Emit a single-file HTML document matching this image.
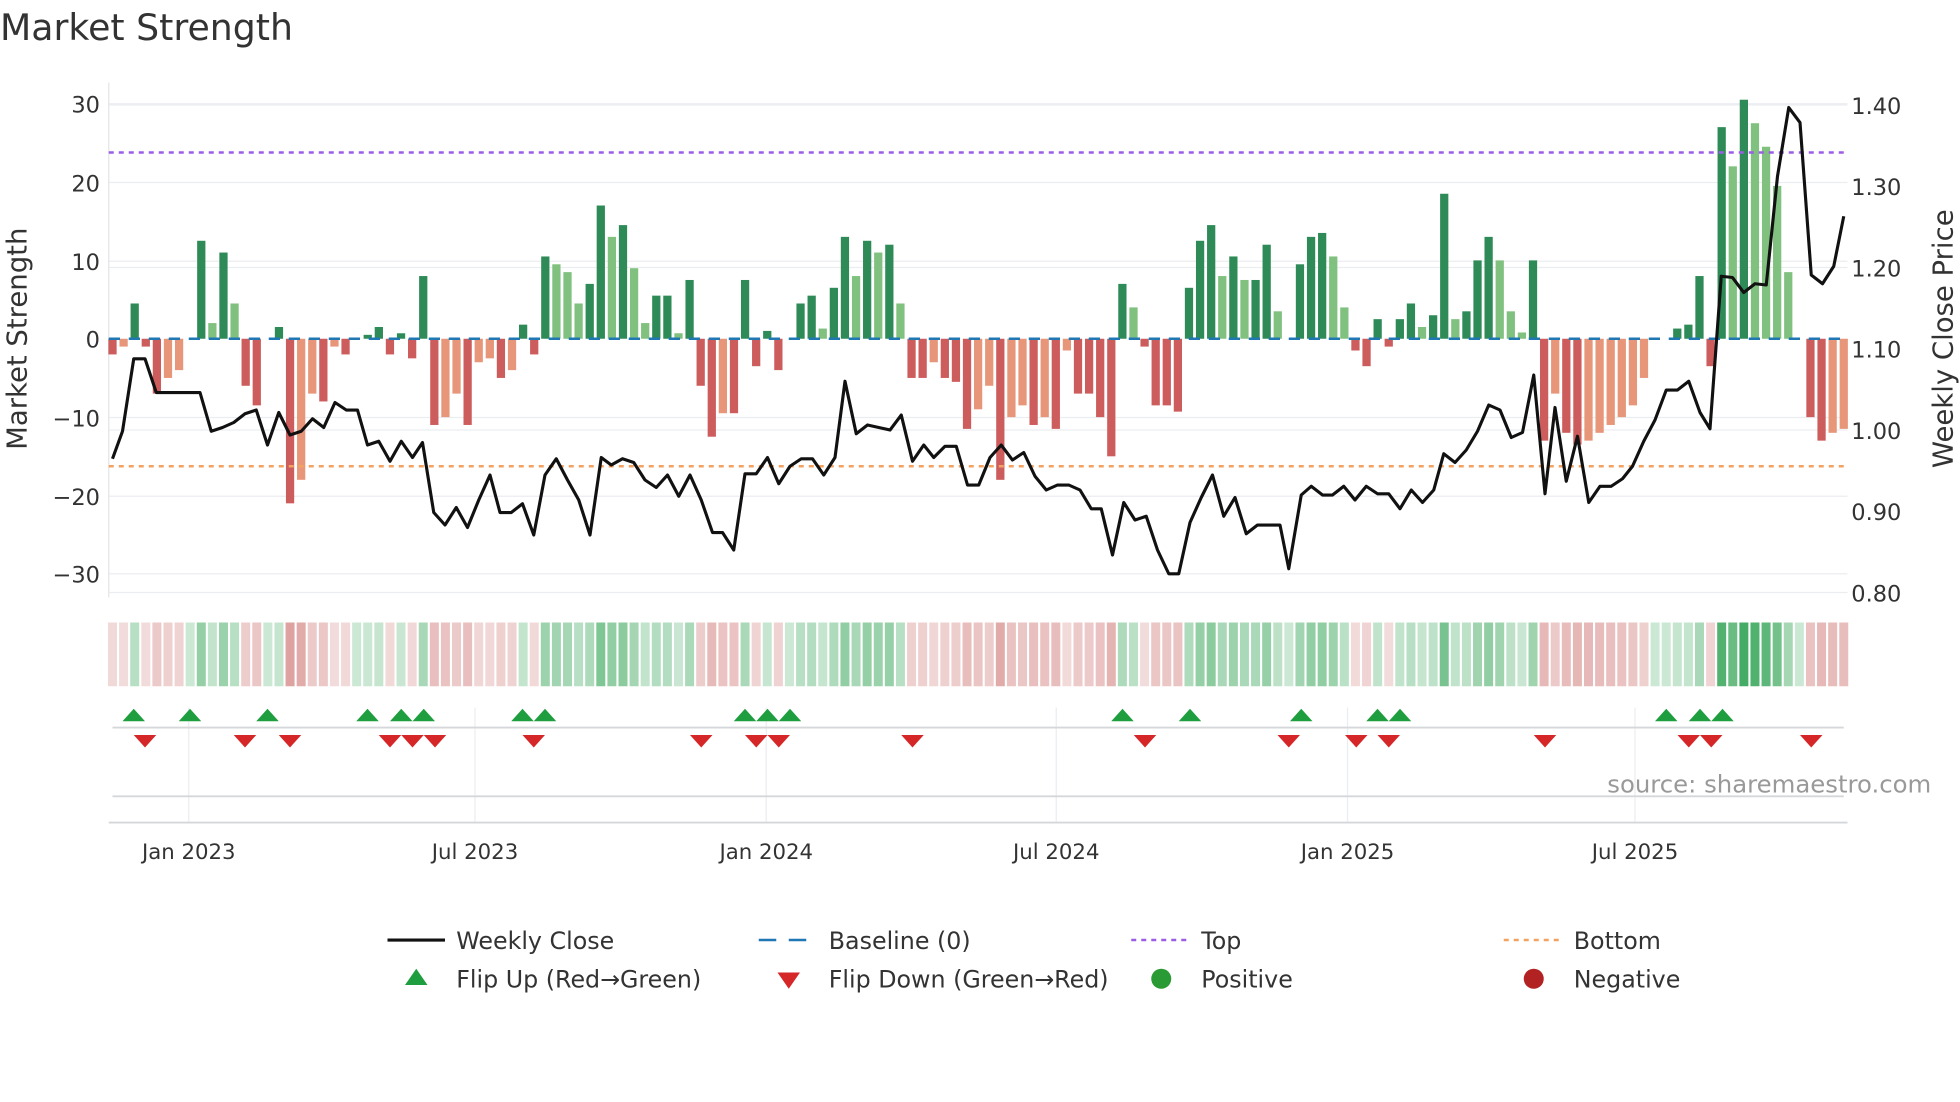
<!DOCTYPE html>
<html><head><meta charset="utf-8"><style>
html,body{margin:0;padding:0;background:#fff;width:1960px;height:1102px;overflow:hidden}
svg{display:block;font-family:"DejaVu Sans","Liberation Sans",sans-serif}
</style></head><body>
<svg id="c" width="1960" height="1102" viewBox="0 0 1568 881.6" xmlns="http://www.w3.org/2000/svg">
<rect width="1568" height="882" fill="#fff"/>
<text x="0" y="32" font-size="29" fill="#333">Market Strength</text>
<g stroke="#ebedf0" stroke-width="1">
<line x1="87" x2="1478" y1="83" y2="83"/><line x1="87" x2="1478" y1="146" y2="146"/>
<line x1="87" x2="1478" y1="209" y2="209"/><line x1="87" x2="1478" y1="334" y2="334"/>
<line x1="87" x2="1478" y1="397" y2="397"/><line x1="87" x2="1478" y1="459" y2="459"/>
<line x1="87" x2="1478" y1="84" y2="84"/><line x1="87" x2="1478" y1="214" y2="214"/>
<line x1="87" x2="1478" y1="344" y2="344"/><line x1="87" x2="1478" y1="474" y2="474"/>
<line x1="151" x2="151" y1="566" y2="658"/><line x1="380" x2="380" y1="566" y2="658"/>
<line x1="613" x2="613" y1="566" y2="658"/><line x1="845" x2="845" y1="566" y2="658"/>
<line x1="1078" x2="1078" y1="566" y2="658"/><line x1="1308" x2="1308" y1="566" y2="658"/>
</g>
<line x1="87" x2="87" y1="66" y2="478" stroke="#e3e5e8"/>
<g id="bars"></g>
<line x1="87" x2="1478" y1="271" y2="271" stroke="#1f77b4" stroke-width="2" stroke-dasharray="9,7"/>
<line x1="87" x2="1478" y1="122" y2="122" stroke="#9b5de5" stroke-width="2" stroke-dasharray="4,4"/>
<line x1="87" x2="1478" y1="373" y2="373" stroke="#f4a261" stroke-width="2" stroke-dasharray="4,4"/>
<polyline id="pl" fill="none" stroke="#111" stroke-width="2.5" stroke-linejoin="round"/>
<g id="strip"></g>
<g font-size="18" fill="#333" text-anchor="end">
<text x="80" y="90">30</text><text x="80" y="153">20</text><text x="80" y="216">10</text><text x="80" y="278">0</text>
<text x="80" y="341">−10</text><text x="80" y="404">−20</text><text x="80" y="466">−30</text>
</g>
<g font-size="18" fill="#333">
<text x="1481" y="91">1.40</text><text x="1481" y="156">1.30</text><text x="1481" y="221">1.20</text><text x="1481" y="286">1.10</text>
<text x="1481" y="351">1.00</text><text x="1481" y="416">0.90</text><text x="1481" y="481">0.80</text>
</g>
<text transform="translate(21,271) rotate(-90)" font-size="22" fill="#333" text-anchor="middle">Market Strength</text>
<text transform="translate(1562,271) rotate(-90)" font-size="22" fill="#333" text-anchor="middle">Weekly Close Price</text>
<line x1="90" x2="1475" y1="582" y2="582" stroke="#d5d7da" stroke-width="1.5"/>
<line x1="90" x2="1475" y1="637" y2="637" stroke="#d5d7da" stroke-width="1.5"/>
<line x1="87" x2="1478" y1="658" y2="658" stroke="#d5d7da" stroke-width="1.5"/>
<g id="flips"></g>
<text x="1545" y="634" font-size="19.5" fill="#999" text-anchor="end">source: sharemaestro.com</text>
<g font-size="17" fill="#333" text-anchor="middle">
<text x="151" y="687">Jan 2023</text><text x="380" y="687">Jul 2023</text><text x="613" y="687">Jan 2024</text>
<text x="845" y="687">Jul 2024</text><text x="1078" y="687">Jan 2025</text><text x="1308" y="687">Jul 2025</text>
</g>
<g font-size="19" fill="#333">
<line x1="310" x2="356" y1="752" y2="752" stroke="#111" stroke-width="2.5"/><text x="365" y="759">Weekly Close</text>
<line x1="607" x2="652" y1="752" y2="752" stroke="#1f77b4" stroke-width="2" stroke-dasharray="14,10"/><text x="663" y="759">Baseline (0)</text>
<line x1="905" x2="950" y1="752" y2="752" stroke="#9b5de5" stroke-width="2" stroke-dasharray="4,4"/><text x="961" y="759">Top</text>
<line x1="1203" x2="1248" y1="752" y2="752" stroke="#f4a261" stroke-width="2" stroke-dasharray="4,4"/><text x="1259" y="759">Bottom</text>
<polygon points="324,788 342,788 333,775" fill="#1e9e3e"/><text x="365" y="790">Flip Up (Red→Green)</text>
<polygon points="622,778 640,778 631,791" fill="#d62728"/><text x="663" y="790">Flip Down (Green→Red)</text>
<circle cx="929" cy="783" r="8" fill="#2a9a34"/><text x="961" y="790">Positive</text>
<circle cx="1227" cy="783" r="8" fill="#b22222"/><text x="1259" y="790">Negative</text>
</g>
</svg>
<script>
var v=[-2,-1,4.5,-1,-7,-5,-4,0,12.5,2,11,4.5,-6,-8.5,0,1.5,-21,-18,-7,-8,-1,-2,0,0.5,1.5,-2,0.7,-2.5,8,-11,-10,-7,-11,-3,-2.5,-5,-4,1.8,-2,10.5,9.5,8.5,4.5,7,17,13,14.5,9,2,5.5,5.5,0.7,7.5,-6,-12.5,-9.5,-9.5,7.5,-3.5,1,-4,0,4.5,5.5,1.3,6.5,13,8,12.5,11,12,4.5,-5,-5,-3,-5,-5.5,-11.5,-9,-6,-18,-10,-8.5,-11,-10,-11.5,-1.5,-7,-7,-10,-15,7,4,-1,-8.5,-8.5,-9.3,6.5,12.5,14.5,8,10.5,7.5,7.5,12,3.5,0,9.5,13,13.5,10.5,4,-1.5,-3.5,2.5,-1,2.5,4.5,1.5,3,18.5,2.5,3.5,10,13,10,3.5,0.8,10,-13,-7,-12,-13.5,-13,-12,-11,-10,-8.5,-5,0,0,1.3,1.8,8,-3.5,27,22,30.5,27.5,24.5,19.5,8.5,0,-10,-13,-12,-11.5];
var n=v.length,x0=90,st=(1475-x0)/(n-1),ns="http://www.w3.org/2000/svg";
var bars=document.getElementById('bars'),strip=document.getElementById('strip');
function R(g,x,y,w,h,f,o){var r=document.createElementNS(ns,'rect');r.setAttribute('x',x);r.setAttribute('y',y);r.setAttribute('width',w);r.setAttribute('height',h);r.setAttribute('fill',f);if(o!=null)r.setAttribute('fill-opacity',o);g.appendChild(r);}
for(var i=0;i<n;i++){var x=x0+i*st,val=v[i],p=i?v[i-1]:0,c;
 if(val>0)c=val>=p?'#2e8b57':'#80c17f';else c=val<=p?'#cd5c5c':'#e8967a';
 var h=Math.abs(val)*6.27;if(val!==0)R(bars,x-3.3,val>0?271-h:271,6.6,h,c);
 var a=0.25+0.65*Math.min(Math.abs(val),30)/30;
 R(strip,x-3.6,498,7.2,51,val>=0?'#31a354':'#c0504d',val>=0?a:a*0.75);}
var pts="90,367 98,345 107,287 116,287 125,314 134,314 143,314 151,314 160,314 169,345 178,342 187,338 196,331 205,328 214,356 223,330 232,348 241,345 250,335 259,342 268,322 277,328 286,328 294,356 303,353 312,369 321,353 330,366 338,354 347,410 356,420 365,406 374,422 383,400 392,380 400,410 409,410 418,403 427,428 436,380 445,367 454,384 463,400 472,428 481,366 489,372 498,367 507,370 516,384 525,390 534,380 543,397 552,380 561,400 570,426 578,426 587,440 596,379 605,379 614,366 623,387 632,373 641,367 650,367 659,380 668,366 676,305 685,347 694,340 703,342 712,344 721,332 730,369 739,356 747,366 756,357 765,357 774,388 783,388 792,366 801,356 810,368 819,362 828,381 837,392 846,388 855,388 864,392 873,407 881,407 890,444 899,402 908,416 917,413 926,440 935,459 943,459 952,418 961,398 970,380 979,413 988,398 997,427 1006,420 1015,420 1024,420 1031,455 1041,396 1049,389 1058,396 1066,396 1075,389 1084,400 1093,389 1102,395 1111,395 1120,407 1129,392 1138,402 1147,392 1155,363 1164,370 1173,360 1182,345 1191,324 1200,328 1209,350 1218,346 1227,300 1236,395 1244,326 1253,385 1262,349 1271,402 1280,389 1289,389 1298,383 1306,373 1315,353 1324,336 1333,312 1342,312 1351,305 1360,330 1368,343 1377,221 1386,222 1395,234 1404,227 1413,228 1422,141 1431,86 1440,98 1449,220 1458,227 1467,213 1475,173";
document.getElementById('pl').setAttribute('points',pts);
var fl=document.getElementById('flips');
[107,152,214,294,321,339,418,436,596,614,632,898,952,1041,1102,1120,1333,1360,1378].forEach(function(x){var p=document.createElementNS(ns,'polygon');p.setAttribute('points',(x-9)+',577 '+(x+9)+',577 '+x+',567');p.setAttribute('fill','#1e9e3e');fl.appendChild(p);});
[116,196,232,312,330,348,427,561,605,623,730,916,1031,1085,1111,1236,1351,1369,1449].forEach(function(x){var p=document.createElementNS(ns,'polygon');p.setAttribute('points',(x-9)+',588 '+(x+9)+',588 '+x+',598');p.setAttribute('fill','#d62728');fl.appendChild(p);});
</script>
</body></html>
